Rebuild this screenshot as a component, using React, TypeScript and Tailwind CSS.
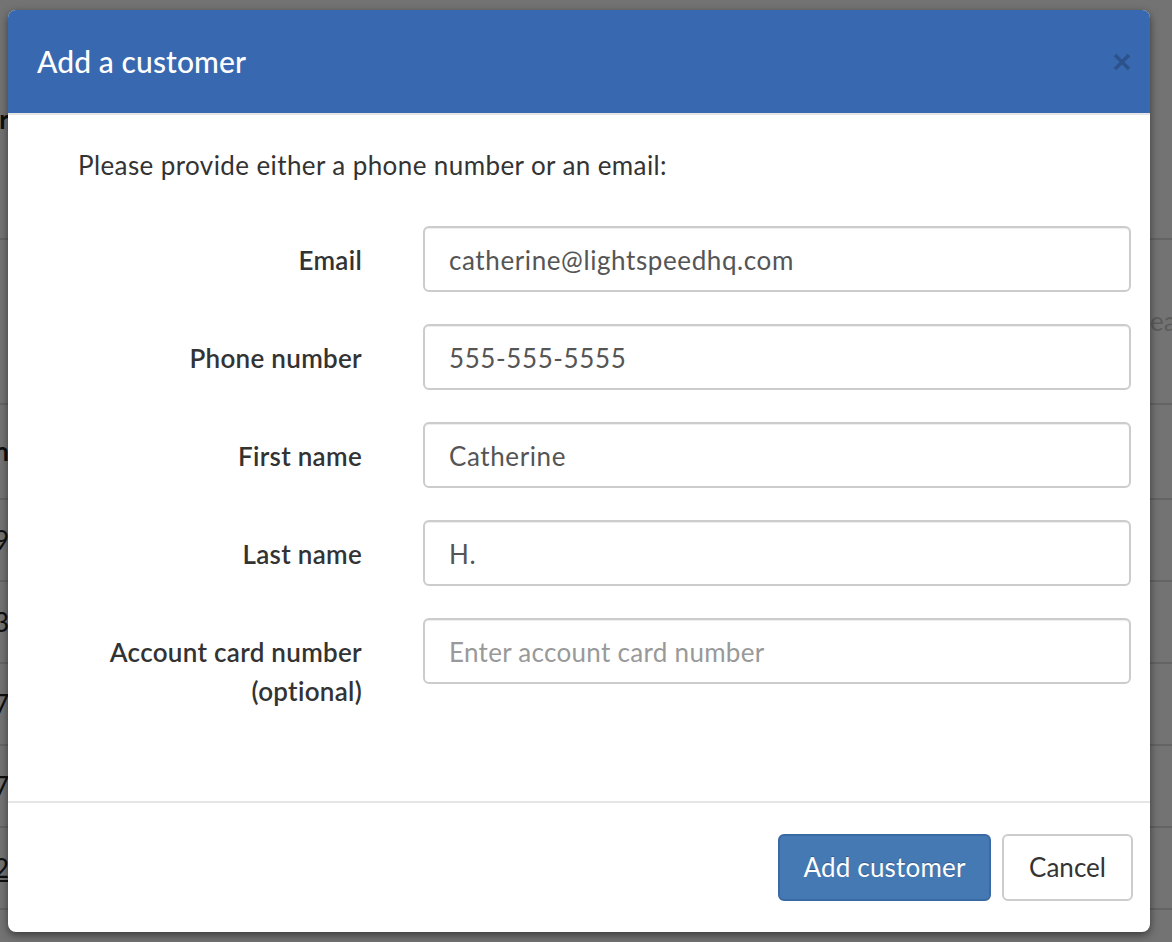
import React from "react"

const backdropRows = [
  { h: "h-[240px]", text: "Customer", bold: true },
  { h: "h-[165px]", text: "", bold: false },
  { h: "h-[95px]", text: "Location", bold: true },
  { h: "h-[82px]", text: "1239", bold: false },
  { h: "h-[82px]", text: "4563", bold: false },
  { h: "h-[82px]", text: "7897", bold: false },
  { h: "h-[82px]", text: "4567", bold: false },
  { h: "h-[82px]", text: "1232", bold: false, link: true },
  { h: "h-[40px]", text: "", bold: false },
]

const fields = [
  { label: "Email", value: "catherine@lightspeedhq.com" },
  { label: "Phone number", value: "555-555-5555" },
  { label: "First name", value: "Catherine" },
  { label: "Last name", value: "H." },
]

function Backdrop() {
  return (
    <div className="flex flex-col">
      {backdropRows.map((row, i) => (
        <div key={i} className={`flex ${row.h} items-center border-b-2 border-[#ddd]`}>
          <div className="flex w-[9px] justify-end overflow-hidden">
            <span
              className={`whitespace-nowrap text-[26px] text-[#222] ${row.bold ? "font-bold" : ""} ${row.link ? "underline" : ""}`}
            >
              {row.text}
            </span>
          </div>
          <div className="flex-1" />
          <div className="w-[22px] overflow-hidden whitespace-nowrap text-[26px] text-[#ccc]">{i === 1 ? "ea" : ""}</div>
        </div>
      ))}
    </div>
  )
}

export default function App() {
  return (
    <div className="relative h-[942px] w-[1172px] overflow-hidden bg-white font-['Lato',sans-serif]">
      <Backdrop />
      <div className="absolute inset-0 bg-black/55" />

      <div className="absolute left-[8px] top-[10px] flex h-[922px] w-[1142px] flex-col overflow-hidden rounded-[8px] bg-white shadow-[0_3px_9px_rgba(0,0,0,0.5)]">
        {/* header */}
        <div className="flex h-[105px] shrink-0 items-center justify-between border-b-2 border-[#e5e5e5] bg-[#3868b0] pl-[29px] pr-[18px]">
          <h2 className="text-[30px] font-medium tracking-[0.1px] text-white">Add a customer</h2>
          <svg width="20" height="20" viewBox="0 0 20 20" className="opacity-20">
            <path d="M3 3 L17 17 M17 3 L3 17" stroke="#000" strokeWidth="3.6" />
          </svg>
        </div>

        {/* body */}
        <div className="flex-1 pt-[32px]">
          <p className="pl-[70px] text-[26px] leading-[36px] tracking-[0.4px] text-[#333]">
            Please provide either a phone number or an email:
          </p>

          <div className="mt-[43px] grid grid-cols-[354px_708px] gap-x-[61px] gap-y-[32px]">
            {fields.map((f) => (
              <React.Fragment key={f.label}>
                <label className="pt-[15px] text-right text-[26px] font-semibold leading-[39px] tracking-[0.3px] text-[#333]">
                  {f.label}
                </label>
                <input
                  readOnly
                  value={f.value}
                  className="h-[66px] rounded-[6px] border-2 border-[#ccc] px-[24px] pt-[2px] text-[26px] tracking-[0.6px] text-[#555] shadow-[inset_0_1px_1px_rgba(0,0,0,0.075)] outline-none"
                />
              </React.Fragment>
            ))}
            <label className="pt-[15px] text-right text-[26px] font-semibold leading-[39px] tracking-[0.3px] text-[#333]">
              Account card number
              <br />
              (optional)
            </label>
            <input
              readOnly
              placeholder="Enter account card number"
              className="h-[66px] rounded-[6px] border-2 border-[#ccc] px-[24px] pt-[2px] text-[26px] tracking-[0.3px] text-[#555] shadow-[inset_0_1px_1px_rgba(0,0,0,0.075)] outline-none placeholder:text-[#999]"
            />
          </div>
        </div>

        {/* footer */}
        <div className="flex h-[131px] shrink-0 items-center justify-end gap-[11px] border-t-2 border-[#e5e5e5] pr-[17px]">
          <button className="h-[67px] w-[213px] rounded-[6px] border-2 border-[#3a6aa3] bg-[#4479b4] text-[26px] tracking-[0.2px] text-white [text-shadow:0_-1px_0_rgba(0,0,0,0.25)]">
            Add customer
          </button>
          <button className="h-[67px] w-[131px] rounded-[6px] border-2 border-[#ccc] bg-white text-[26px] text-[#333]">
            Cancel
          </button>
        </div>
      </div>
    </div>
  )
}
